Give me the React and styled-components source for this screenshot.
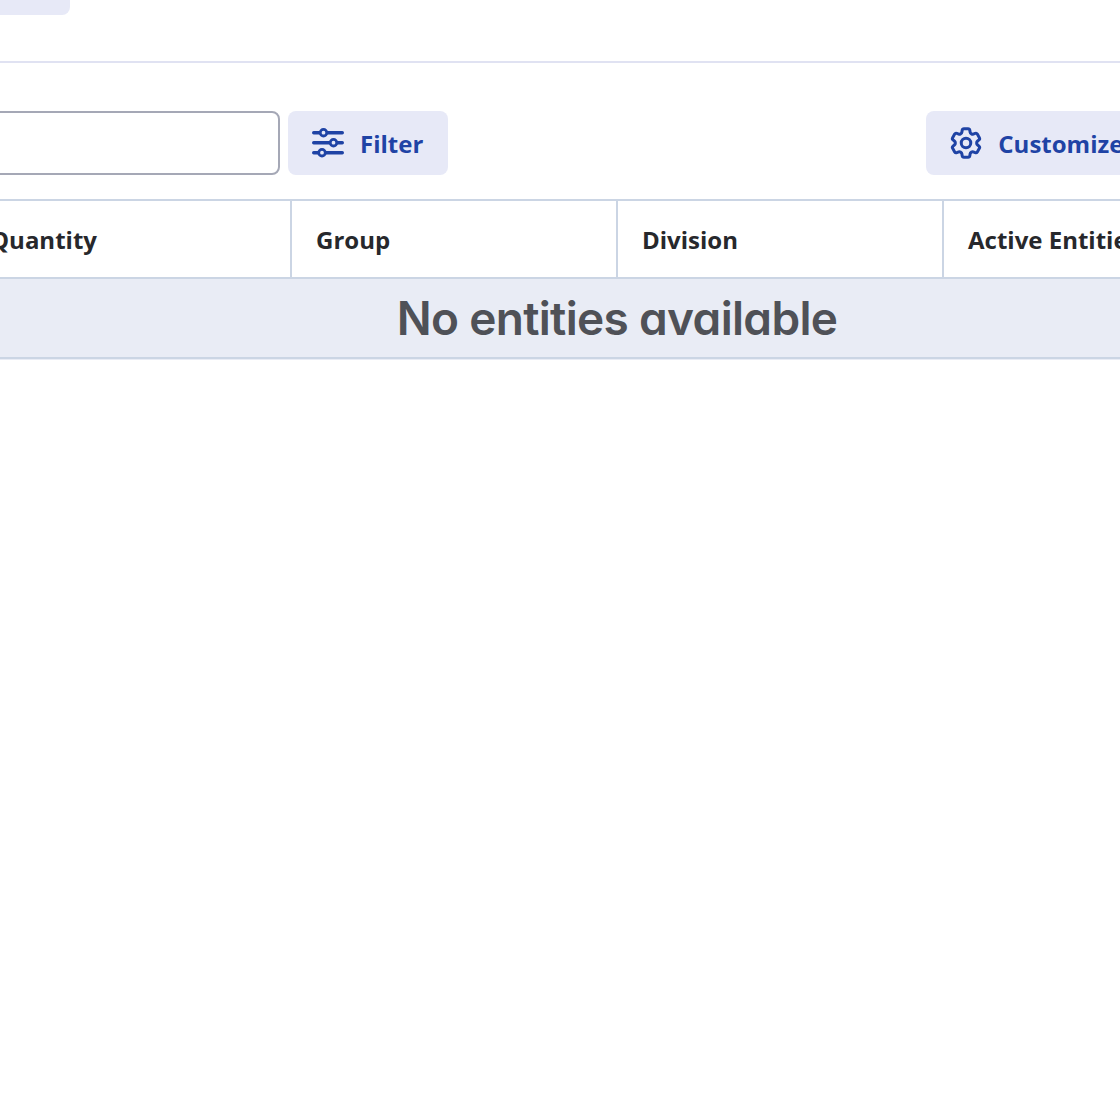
import React from "react";
import styled, { createGlobalStyle } from "styled-components";
import { HiOutlineCog6Tooth } from "react-icons/hi2";

const Global = createGlobalStyle`
  html, body { margin: 0; padding: 0; background: #fff; overflow: hidden; height: 100%; }
  #root { width: 1120px; height: 1120px; overflow: hidden; }
`;

const Page = styled.div`
  width: 2612px;
  margin-left: -688px;
  font-family: "Open Sans", sans-serif;
`;

const TopBar = styled.div`
  height: 61px;
  border-bottom: 2px solid #e0e2f2;
`;

const TopTab = styled.div`
  width: 200px;
  height: 15px;
  margin-left: 558px;
  background: #e7e9f7;
  border-radius: 0 0 8px 8px;
`;

const Toolbar = styled.div`
  display: flex;
  align-items: stretch;
  gap: 8px;
  height: 64px;
  margin-top: 48px;
  padding-left: 488px;
`;

const SearchBox = styled.div`
  width: 480px;
  box-sizing: border-box;
  border: 2px solid #a5a8b6;
  border-radius: 8px;
  background: #fff;
`;

const ActionButton = styled.button`
  display: flex;
  align-items: center;
  gap: 16px;
  height: 64px;
  padding: 0 25px 0 24px;
  border: 0;
  border-radius: 8px;
  background: #e7e9f7;
  color: #1f43a5;
  font: 700 24px "Open Sans", sans-serif;
  margin-left: ${(p) => p.$push || 0}px;
`;

const Table = styled.div`
  width: 2610px;
  margin-top: 24px;
  border-top: 2px solid #cbd5e4;
`;

const HeaderRow = styled.div`
  display: grid;
  grid-template-columns: repeat(8, 326px);
  height: 76px;
  border-bottom: 2px solid #cbd5e4;
`;

const HeaderCell = styled.div`
  display: flex;
  align-items: center;
  padding-left: 24px;
  border-left: 2px solid #cbd5e4;
  font-size: 24px;
  font-weight: 700;
  color: #27282c;
  white-space: nowrap;
  &:first-child { border-left: 0; }
`;

const EmptyRow = styled.div`
  display: flex;
  align-items: center;
  justify-content: center;
  height: 78px;
  background: #e9ecf5;
  border-bottom: 2px solid #cbd5e4;
  box-shadow: 0 1px 0 #e9ecf5;
  font-family: Inter, sans-serif;
  font-feature-settings: "cv11" 1;
  font-size: 46px;
  font-weight: 600;
  letter-spacing: -0.67px;
  color: #4f5157;
`;

const SlidersIcon = () => (
  <svg width="32" height="32" viewBox="0 0 32 32" fill="none" stroke="currentColor" strokeWidth="3.4" strokeLinecap="round">
    <path d="M1.7 5.7H7.5M15.5 5.7H30.3M1.7 15.7H17.5M25.5 15.7H30.3M1.7 25.7H6M14 25.7H30.3" />
    <circle cx="11.5" cy="5.7" r="3.3" strokeWidth="2.8" />
    <circle cx="21.5" cy="15.7" r="3.3" strokeWidth="2.8" />
    <circle cx="10" cy="25.7" r="3.3" strokeWidth="2.8" />
  </svg>
);

const GearIcon = styled(HiOutlineCog6Tooth)`
  width: 38px;
  height: 38px;
  margin: 0 -3px;
  flex: none;
  stroke-width: 1.9;
`;

const columns = ["Name", "Type", "Quantity", "Group", "Division", "Active Entities", "Status", "Updated"];

export default function App() {
  return (
    <Page>
      <Global />
      <TopBar>
        <TopTab />
      </TopBar>
      <Toolbar>
        <SearchBox />
        <ActionButton>
          <SlidersIcon />
          Filter
        </ActionButton>
        <ActionButton $push={470}>
          <GearIcon />
          Customize
        </ActionButton>
      </Toolbar>
      <Table>
        <HeaderRow>
          {columns.map((c) => (
            <HeaderCell key={c}>{c}</HeaderCell>
          ))}
        </HeaderRow>
        <EmptyRow>No entities available</EmptyRow>
      </Table>
    </Page>
  );
}
